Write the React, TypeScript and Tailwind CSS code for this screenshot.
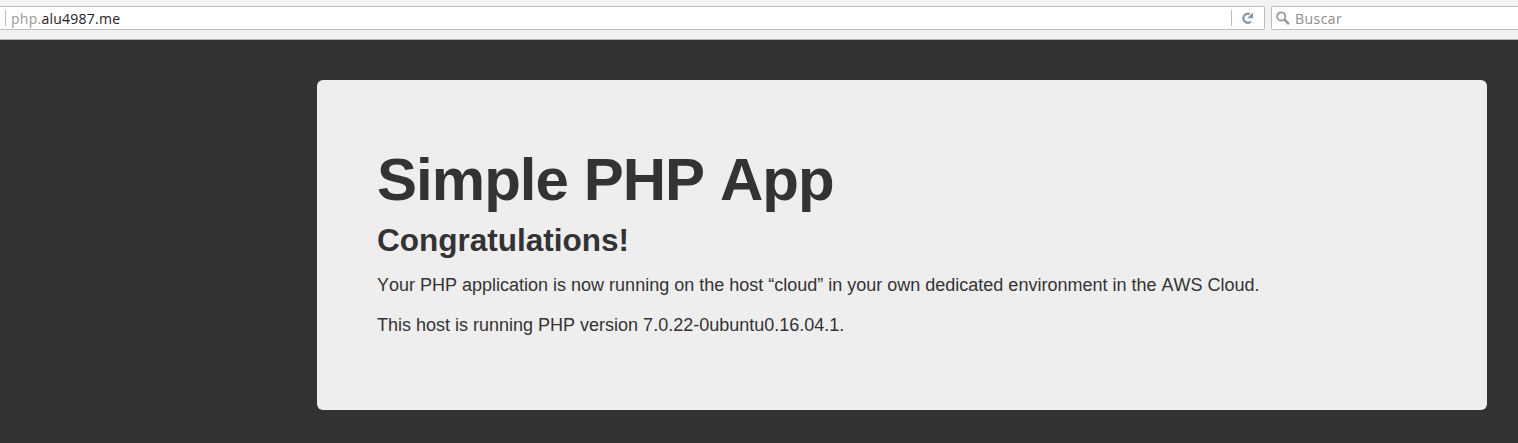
export default function App() {
  return (
    <div className="flex h-[443px] w-full flex-col overflow-hidden bg-[#333333]">
      <header className="flex h-10 shrink-0 items-start gap-1.5 border-b border-[#b5b3b1] bg-[#f2f2f2] pt-1.5 font-['Open_Sans',sans-serif] text-[14px] tracking-[0.25px]">
        <div className="flex h-6 w-[1265px] items-center rounded-r-[2px] border border-l-0 border-[#bebebe] bg-white">
          <span className="ml-[5px] h-4 w-px bg-[#bbbbbb]" />
          <span className="ml-[5px] grow text-[#222222]"><span className="text-[#999999]">php.</span>alu4987.me</span>
          <span className="h-4 w-px bg-[#bbbbbb]" />
          <svg className="mx-[9px]" width="14" height="14" viewBox="0 0 14 14" fill="none" stroke="#8996a4" strokeWidth="2.1"><path d="M8.8 3.1A4.5 4.5 0 1 0 10 10.5" /><path d="M12 1.4V7.2H6.2Z" fill="#8996a4" stroke="none" /></svg>
        </div>
        <div className="flex h-6 grow items-center rounded-l-[2px] border border-r-0 border-[#bebebe] bg-white pl-1 tracking-[0.45px] text-[#8c8c8c]">
          <svg width="15" height="15" viewBox="0 0 15 15" fill="none" stroke="#999999" strokeWidth="1.8"><circle cx="5.2" cy="5.4" r="4.1" /><path d="M8.3 8.5L13 13.2" strokeWidth="2.5" /></svg>
          <span className="ml-1">Buscar</span>
        </div>
      </header>
      <main className="ml-[317px] mt-10 h-[330px] w-[1170px] shrink-0 rounded-[6px] bg-[#eeeeee] p-[60px] font-['Liberation_Sans',sans-serif] text-[18px] leading-[30px] text-[#333333] [font-kerning:none]">
        <h1 className="pt-[10px] text-[60px] font-bold leading-[60px] tracking-[-0.96px]">Simple PHP App</h1>
        <h2 className="mt-[10px] text-[31.5px] font-bold leading-[40px]">Congratulations!</h2>
        <p className="mt-[10px]">Your PHP application is now running on the host “cloud” in your own dedicated environment in the AWS Cloud.</p>
        <p className="mt-[10px]">This host is running PHP version 7.0.22-0ubuntu0.16.04.1.</p>
      </main>
    </div>
  );
}
